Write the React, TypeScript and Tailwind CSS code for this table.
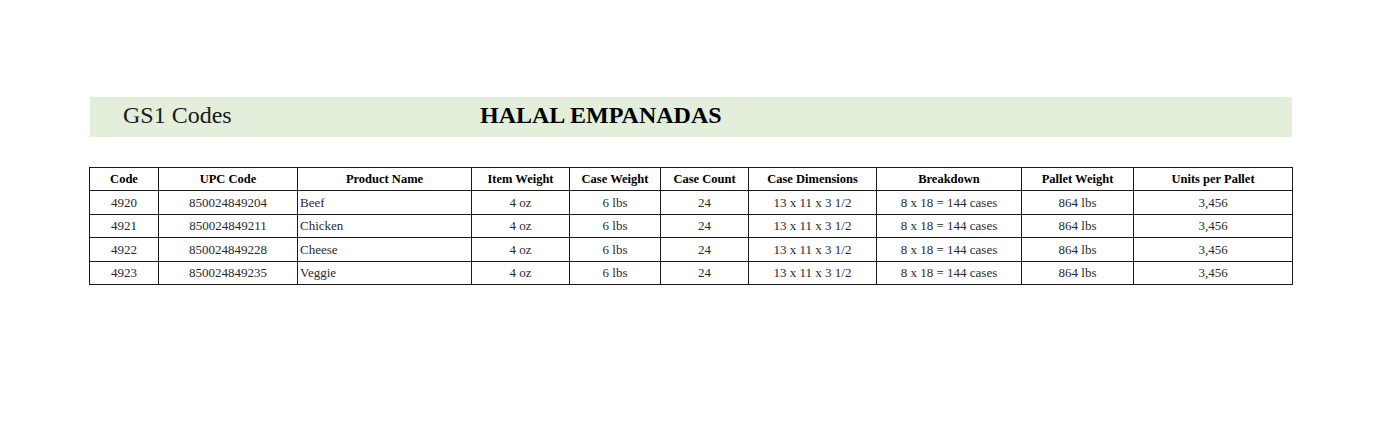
const columns = [
  { label: "Code", width: 69 },
  { label: "UPC Code", width: 139 },
  { label: "Product Name", width: 174 },
  { label: "Item Weight", width: 98 },
  { label: "Case Weight", width: 91 },
  { label: "Case Count", width: 88 },
  { label: "Case Dimensions", width: 128 },
  { label: "Breakdown", width: 145 },
  { label: "Pallet Weight", width: 112 },
  { label: "Units per Pallet", width: 159 },
];

const products = [
  { code: "4920", upc: "850024849204", name: "Beef" },
  { code: "4921", upc: "850024849211", name: "Chicken" },
  { code: "4922", upc: "850024849228", name: "Cheese" },
  { code: "4923", upc: "850024849235", name: "Veggie" },
];

export default function App() {
  return (
    <div className="min-h-[436px] w-[1397px] bg-white pl-[90px] pt-[97px] font-['Liberation_Serif',serif] text-black">
      {/* title band */}
      <div className="flex h-[40px] w-[1202px] items-center bg-[#e3eedb] pb-[4px] text-[24px] leading-none">
        <span className="w-[390px] pl-[33px] text-[#1a1a1a]">GS1 Codes</span>
        <span className="font-bold">HALAL EMPANADAS</span>
      </div>

      <table className="mt-[30px] -ml-px table-fixed border-collapse border-[1.5px] border-[#1a1a1a] text-[13px]">
        <colgroup>
          {columns.map((c) => (
            <col key={c.label} style={{ width: c.width }} />
          ))}
        </colgroup>
        <thead>
          <tr className="h-[23px]">
            {columns.map((c) => (
              <th key={c.label} className="border border-[#1a1a1a] p-0 text-center text-[12.5px] font-bold">
                {c.label}
              </th>
            ))}
          </tr>
        </thead>
        <tbody className="text-[#2a2a2a]">
          {products.map((p) => (
            <tr key={p.code} className="h-[23.5px]">
              <td className="border border-[#1a1a1a] p-0 text-center">{p.code}</td>
              <td className="border border-[#1a1a1a] p-0 text-center">{p.upc}</td>
              <td className="border border-[#1a1a1a] p-0 pl-[2px] text-left">{p.name}</td>
              <td className="border border-[#1a1a1a] p-0 text-center">4 oz</td>
              <td className="border border-[#1a1a1a] p-0 text-center">6 lbs</td>
              <td className="border border-[#1a1a1a] p-0 text-center">24</td>
              <td className="border border-[#1a1a1a] p-0 text-center">13 x 11 x 3 1/2</td>
              <td className="border border-[#1a1a1a] p-0 text-center">8 x 18 = 144 cases</td>
              <td className="border border-[#1a1a1a] p-0 text-center">864 lbs</td>
              <td className="border border-[#1a1a1a] p-0 text-center">3,456</td>
            </tr>
          ))}
        </tbody>
      </table>
    </div>
  );
}
